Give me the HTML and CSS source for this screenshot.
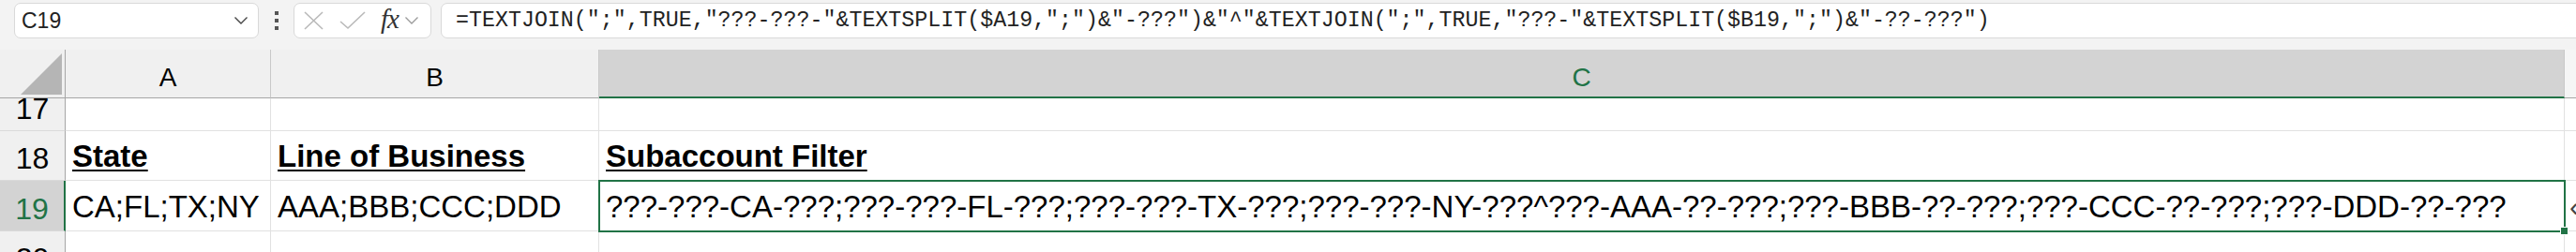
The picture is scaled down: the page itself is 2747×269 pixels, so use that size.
FILE: index.html
```html
<!DOCTYPE html>
<html lang="en">
<head>
  <meta charset="UTF-8">
  <title>Subaccount Filter</title>
  <link rel="stylesheet" href="styles.css">
</head>
<body>
  <!-- formula bar -->
  <div class="toolbar">
    <div class="name-box">
      <span>C19</span>
      <svg class="chev" width="16" height="10" viewBox="0 0 16 10"><path d="M1.5 1.5 L8 8 L14.5 1.5" fill="none" stroke="#444" stroke-width="1.4"/></svg>
    </div>
    <div class="grip"><span></span><span></span><span></span></div>
    <div class="fx-box">
      <svg width="24" height="20" viewBox="0 0 24 20"><path d="M2 1 L21 19 M21 1 L2 19" fill="none" stroke="#b9b9b9" stroke-width="1.6"/></svg>
      <svg class="check" width="28" height="20" viewBox="0 0 28 20"><path d="M1 11 L9 18 L27 1" fill="none" stroke="#b9b9b9" stroke-width="1.6"/></svg>
      <span class="fx">fx</span>
      <svg width="16" height="10" viewBox="0 0 16 10"><path d="M1.5 1.5 L8 8 L14.5 1.5" fill="none" stroke="#9a9a9a" stroke-width="1.3"/></svg>
    </div>
    <div class="formula">=TEXTJOIN(";",TRUE,"???-???-"&amp;TEXTSPLIT($A19,";")&amp;"-???")&amp;"^"&amp;TEXTJOIN(";",TRUE,"???-"&amp;TEXTSPLIT($B19,";")&amp;"-??-???")</div>
  </div>

  <!-- grid -->
  <div class="sheet">
    <div class="corner"><div class="tri"></div></div>
    <div class="col-head">A</div>
    <div class="col-head">B</div>
    <div class="col-head active">C</div>
    <div class="col-head last"></div>

    <div class="row-head">17</div>
    <div class="cell"></div>
    <div class="cell"></div>
    <div class="cell"></div>
    <div class="cell"></div>

    <div class="row-head">18</div>
    <div class="cell title">State</div>
    <div class="cell title">Line of Business</div>
    <div class="cell title">Subaccount Filter</div>
    <div class="cell"></div>

    <div class="row-head active">19</div>
    <div class="cell">CA;FL;TX;NY</div>
    <div class="cell">AAA;BBB;CCC;DDD</div>
    <div class="cell selected">???-???-CA-???;???-???-FL-???;???-???-TX-???;???-???-NY-???^???-AAA-??-???;???-BBB-??-???;???-CCC-??-???;???-DDD-??-???</div>
    <div class="cell overflow">&#8249;</div>

    <div class="row-head">20</div>
    <div class="cell"></div>
    <div class="cell"></div>
    <div class="cell"></div>
    <div class="cell"></div>
  </div>
</body>
</html>
```

FILE: styles.css
```css
body {
  margin: 0;
  padding: 0;
  width: 2747px;
  height: 269px;
  overflow: hidden;
  background-color: #f3f3f3;
  font-family: "Liberation Sans", Arial, sans-serif;
  color: #000000;
}

/* formula bar */
.toolbar {
  height: 53px;
  box-sizing: border-box;
  padding: 3px 0 12px 15px;
  display: flex;
  align-items: stretch;
  white-space: nowrap;
}

.name-box,
.fx-box,
.formula {
  background-color: #ffffff;
  border: 1px solid #d9d9d9;
  border-radius: 7px;
  box-sizing: border-box;
  display: flex;
  align-items: center;
}

.name-box {
  width: 261px;
  padding: 0 10px 0 7px;
  justify-content: space-between;
  font-size: 23px;
  color: #222222;
}

.grip {
  width: 37px;
  display: flex;
  flex-direction: column;
  align-items: center;
  justify-content: center;
  gap: 4px;
}

.grip span {
  width: 4px;
  height: 4px;
  background-color: #555555;
}

.fx-box {
  width: 147px;
  padding: 0 0 0 9px;
  gap: 0;
}

.fx-box .check {
  margin-left: 15px;
}

.fx {
  font-family: "Liberation Serif", "Times New Roman", serif;
  font-style: italic;
  font-size: 29px;
  color: #333333;
  margin: 0 6px 4px 16px;
  letter-spacing: -1px;
}

.formula {
  flex: 1;
  margin-left: 10px;
  margin-right: -20px;
  padding-left: 15px;
  font-family: "Liberation Mono", "Courier New", monospace;
  font-size: 23.3px;
  color: #222222;
  overflow: hidden;
}

/* grid */
.sheet {
  display: grid;
  grid-template-columns: 70px 219px 350px 2096px 1fr;
  grid-template-rows: 52px 35px 53px 54px 53px;
  background-color: #ffffff;
}

.sheet > div {
  box-sizing: border-box;
  white-space: nowrap;
}

.corner {
  background-color: #f0f0f0;
  border-right: 1px solid #a6a6a6;
  border-bottom: 1px solid #a6a6a6;
  display: flex;
  justify-content: flex-end;
  align-items: flex-end;
  padding: 0 3px 3px 0;
}

.tri {
  width: 44px;
  height: 44px;
  background-color: #b5b5b5;
  clip-path: polygon(100% 0, 100% 100%, 0 100%);
}

.col-head {
  background-color: #f0f0f0;
  border-right: 1px solid #c9c9c9;
  border-bottom: 1px solid #a6a6a6;
  display: flex;
  justify-content: center;
  align-items: flex-end;
  padding-bottom: 5px;
  font-size: 28px;
  line-height: 32px;
}

.col-head.active {
  background-color: #d3d3d3;
  border-bottom: 2px solid #217346;
  color: #217346;
  padding-bottom: 4px;
}

.col-head.last {
  background-color: #f5f5f5;
  border-right: none;
}

.row-head {
  background-color: #f0f0f0;
  border-right: 1px solid #a6a6a6;
  border-bottom: 1px solid #dadada;
  display: flex;
  justify-content: center;
  align-items: flex-end;
  padding-bottom: 5px;
  font-size: 32px;
  line-height: 36px;
}

.row-head.active {
  background-color: #d3d3d3;
  border-right: 2px solid #217346;
  color: #217346;
}

.cell {
  border-right: 1px solid #e1e1e1;
  border-bottom: 1px solid #e1e1e1;
  display: flex;
  align-items: flex-end;
  padding: 0 7px 6px 7px;
  font-size: 33px;
  line-height: 38px;
  overflow: visible;
}

.cell.title {
  font-weight: bold;
  text-decoration: underline;
  text-decoration-thickness: 2px;
  text-underline-offset: 3px;
}

.cell.selected {
  position: relative;
  outline: 2px solid #217346;
  outline-offset: -1px;
  z-index: 1;
}

.cell.selected::after {
  content: "";
  position: absolute;
  right: -5px;
  bottom: -5px;
  width: 7px;
  height: 7px;
  background-color: #217346;
  border: 1px solid #ffffff;
}

.cell.overflow {
  padding-left: 5px;
  font-size: 30px;
  color: #444444;
  overflow: hidden;
}
```
